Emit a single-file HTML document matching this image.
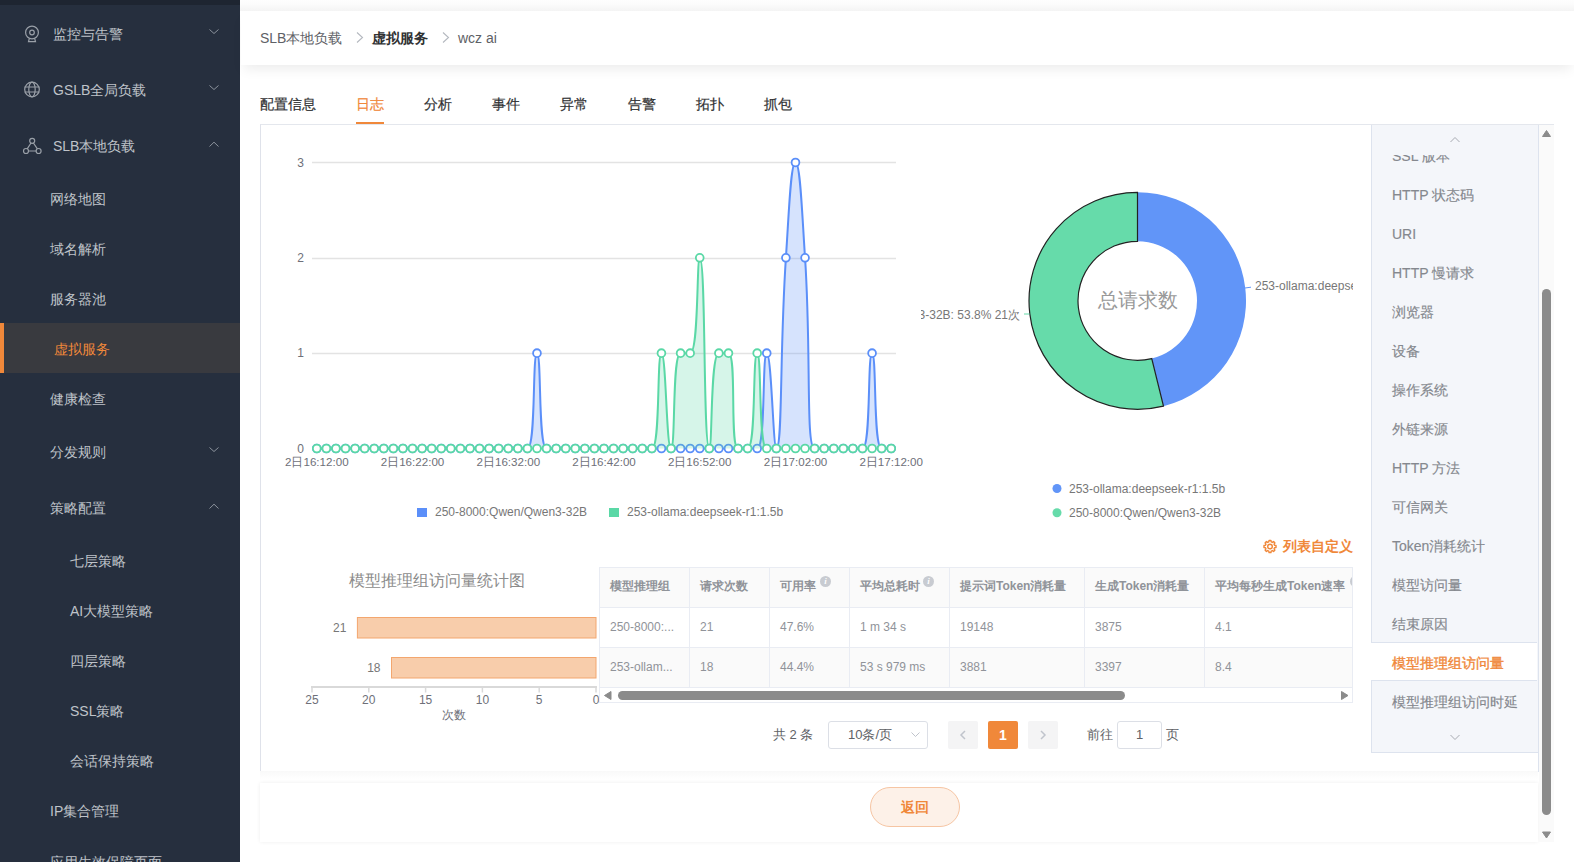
<!DOCTYPE html>
<html><head><meta charset="utf-8"><style>
html,body{margin:0;padding:0;width:1574px;height:862px;overflow:hidden;background:#fff;font-family:"Liberation Sans",sans-serif}
.sbt{position:absolute;font-size:14px;line-height:20px;color:#bfc3c9;white-space:nowrap}
.t14{position:absolute;font-size:14px;line-height:20px;white-space:nowrap}
.t13{position:absolute;font-size:13px;line-height:20px;white-space:nowrap}
.t12{position:absolute;font-size:12px;line-height:16px;white-space:nowrap}
.ax{font-size:12px;fill:#6e7079;font-family:"Liberation Sans",sans-serif}
svg text{font-family:"Liberation Sans",sans-serif}
</style></head><body>
<div style="position:absolute;left:0;top:0;width:240px;height:862px;background:#262f3e;overflow:hidden">
<div style="position:absolute;left:0;top:0;width:240px;height:5px;background:#1e2531"></div>
<div class="sbt" style="left:53px;top:24px">监控与告警</div>
<svg style="position:absolute;left:0;top:0" width="240" height="862"><path d="M209.5,29.5 L214,33.5 L218.5,29.5" fill="none" stroke="#8b929c" stroke-width="1"/></svg>
<div class="sbt" style="left:53px;top:80px">GSLB全局负载</div>
<svg style="position:absolute;left:0;top:0" width="240" height="862"><path d="M209.5,85.5 L214,89.5 L218.5,85.5" fill="none" stroke="#8b929c" stroke-width="1"/></svg>
<div class="sbt" style="left:53px;top:136px">SLB本地负载</div>
<svg style="position:absolute;left:0;top:0" width="240" height="862"><path d="M209.5,146.5 L214,142.2 L218.5,146.5" fill="none" stroke="#8b929c" stroke-width="1"/></svg>
<div class="sbt" style="left:50px;top:189px">网络地图</div>
<div class="sbt" style="left:50px;top:239px">域名解析</div>
<div class="sbt" style="left:50px;top:289px">服务器池</div>
<div style="position:absolute;left:0;top:323px;width:240px;height:50px;background:#393a3f"></div>
<div style="position:absolute;left:0;top:323px;width:4px;height:50px;background:#f0883a"></div>
<div class="sbt" style="left:54px;top:339px;color:#f0883a">虚拟服务</div>
<div class="sbt" style="left:50px;top:389px">健康检查</div>
<div class="sbt" style="left:50px;top:442px">分发规则</div>
<svg style="position:absolute;left:0;top:0" width="240" height="862"><path d="M209.5,447.5 L214,451.5 L218.5,447.5" fill="none" stroke="#8b929c" stroke-width="1"/></svg>
<div class="sbt" style="left:50px;top:498px">策略配置</div>
<svg style="position:absolute;left:0;top:0" width="240" height="862"><path d="M209.5,508.5 L214,504.2 L218.5,508.5" fill="none" stroke="#8b929c" stroke-width="1"/></svg>
<div class="sbt" style="left:70px;top:551px">七层策略</div>
<div class="sbt" style="left:70px;top:601px">AI大模型策略</div>
<div class="sbt" style="left:70px;top:651px">四层策略</div>
<div class="sbt" style="left:70px;top:701px">SSL策略</div>
<div class="sbt" style="left:70px;top:751px">会话保持策略</div>
<div class="sbt" style="left:50px;top:801px">IP集合管理</div>
<div class="sbt" style="left:50px;top:852px">应用生效保障页面</div>
<svg style="position:absolute;left:0;top:0" width="60" height="200">
<g fill="none" stroke="#9aa0a8" stroke-width="1.2">
<circle cx="32" cy="32.5" r="6.4"/><circle cx="32" cy="32.5" r="2.3"/><path d="M29.3,38.6 L28.5,41.6 L35.5,41.6 L34.7,38.6"/>
<circle cx="32" cy="89.5" r="7.3"/><ellipse cx="32" cy="89.5" rx="3.2" ry="7.3"/><path d="M24.7,87 H39.3 M24.7,92 H39.3"/>
<circle cx="32.2" cy="140.8" r="2.5"/><circle cx="26" cy="151" r="2.5"/><circle cx="38.6" cy="151" r="2.5"/>
<path d="M31,143 L27.2,148.8 M33.4,143 L37.4,148.8 M28.5,151 H36.1"/>
</g></svg>
</div>

<div style="position:absolute;left:240px;top:0;width:1334px;height:11px;background:linear-gradient(#fefefe 0%,#fcfcfc 35%,#f4f4f4 100%)"></div>
<div style="position:absolute;left:241px;top:11px;width:1333px;height:54px;background:#fff;box-shadow:0 7px 12px -3px rgba(0,0,0,0.08)"></div>
<div class="t14" style="left:260px;top:28px;color:#5e6166">SLB本地负载</div>
<svg style="position:absolute;left:353.5px;top:31px" width="12" height="14"><path d="M3,1.5 L8.5,6.5 L3,11.5" fill="none" stroke="#b4b8bf" stroke-width="1.1"/></svg>
<div class="t14" style="left:372px;top:28px;color:#303133;font-weight:bold">虚拟服务</div>
<svg style="position:absolute;left:439.5px;top:31px" width="12" height="14"><path d="M3,1.5 L8.5,6.5 L3,11.5" fill="none" stroke="#b4b8bf" stroke-width="1.1"/></svg>
<div class="t14" style="left:458px;top:28px;color:#5e6166">wcz ai</div>

<div class="t14" style="left:260px;top:94px;color:#303133;-webkit-text-stroke:0.2px #303133">配置信息</div>
<div class="t14" style="left:356px;top:94px;color:#f0883a;-webkit-text-stroke:0.2px #f0883a">日志</div>
<div class="t14" style="left:424px;top:94px;color:#303133;-webkit-text-stroke:0.2px #303133">分析</div>
<div class="t14" style="left:492px;top:94px;color:#303133;-webkit-text-stroke:0.2px #303133">事件</div>
<div class="t14" style="left:560px;top:94px;color:#303133;-webkit-text-stroke:0.2px #303133">异常</div>
<div class="t14" style="left:628px;top:94px;color:#303133;-webkit-text-stroke:0.2px #303133">告警</div>
<div class="t14" style="left:696px;top:94px;color:#303133;-webkit-text-stroke:0.2px #303133">拓扑</div>
<div class="t14" style="left:764px;top:94px;color:#303133;-webkit-text-stroke:0.2px #303133">抓包</div>
<div style="position:absolute;left:356px;top:122px;width:28px;height:3px;background:#f0883a"></div>

<div style="position:absolute;left:260px;top:124px;width:1278px;height:647px;border-top:1px solid #e4e7ed;border-left:1px solid #dfe2ea;box-sizing:border-box;"></div>
<div style="position:absolute;left:260px;top:771px;width:1278px;height:8px;background:linear-gradient(#f9f9f9,#fff)"></div>
<div style="position:absolute;left:260px;top:783px;width:1278px;height:59px;background:#fff;box-shadow:0 0 4px rgba(0,0,0,0.07)"></div>
<div style="position:absolute;left:870px;top:787px;width:90px;height:40px;border:1px solid #f6c5a3;background:#fdf1e8;border-radius:20px;box-sizing:border-box"></div>
<div class="t14" style="left:870px;top:797px;width:90px;text-align:center;color:#f0883a;font-weight:bold">返回</div>

<svg style="position:absolute;left:0;top:0" width="1574" height="862">
<line x1="312" y1="353.5" x2="896" y2="353.5" stroke="#e3e3e3" stroke-width="1.3"/>
<line x1="312" y1="258.5" x2="896" y2="258.5" stroke="#e3e3e3" stroke-width="1.3"/>
<line x1="312" y1="162.5" x2="896" y2="162.5" stroke="#e3e3e3" stroke-width="1.3"/>
<text x="304" y="452.5" text-anchor="end" class="ax">0</text>
<text x="304" y="357.1666666666667" text-anchor="end" class="ax">1</text>
<text x="304" y="261.83333333333337" text-anchor="end" class="ax">2</text>
<text x="304" y="166.5" text-anchor="end" class="ax">3</text>
<text x="316.8" y="466" text-anchor="middle" class="ax" style="font-size:11.6px">2日16:12:00</text>
<text x="412.5" y="466" text-anchor="middle" class="ax" style="font-size:11.6px">2日16:22:00</text>
<text x="508.3" y="466" text-anchor="middle" class="ax" style="font-size:11.6px">2日16:32:00</text>
<text x="604.0" y="466" text-anchor="middle" class="ax" style="font-size:11.6px">2日16:42:00</text>
<text x="699.7" y="466" text-anchor="middle" class="ax" style="font-size:11.6px">2日16:52:00</text>
<text x="795.5" y="466" text-anchor="middle" class="ax" style="font-size:11.6px">2日17:02:00</text>
<text x="891.2" y="466" text-anchor="middle" class="ax" style="font-size:11.6px">2日17:12:00</text>
<path d="M316.79,448.50 C316.79,448.50 321.57,448.50 326.36,448.50 C331.15,448.50 331.15,448.50 335.93,448.50 C340.72,448.50 340.72,448.50 345.51,448.50 C350.30,448.50 350.30,448.50 355.08,448.50 C359.87,448.50 359.87,448.50 364.66,448.50 C369.44,448.50 369.44,448.50 374.23,448.50 C379.02,448.50 379.02,448.50 383.80,448.50 C388.59,448.50 388.59,448.50 393.38,448.50 C398.16,448.50 398.16,448.50 402.95,448.50 C407.74,448.50 407.74,448.50 412.52,448.50 C417.31,448.50 417.31,448.50 422.10,448.50 C426.89,448.50 426.89,448.50 431.67,448.50 C436.46,448.50 436.46,448.50 441.25,448.50 C446.03,448.50 446.03,448.50 450.82,448.50 C455.61,448.50 455.61,448.50 460.39,448.50 C465.18,448.50 465.18,448.50 469.97,448.50 C474.75,448.50 474.75,448.50 479.54,448.50 C484.33,448.50 484.33,448.50 489.11,448.50 C493.90,448.50 493.90,448.50 498.69,448.50 C503.48,448.50 503.48,448.50 508.26,448.50 C513.05,448.50 513.05,448.50 517.84,448.50 C522.62,448.50 526.54,448.50 527.41,448.50 C536.11,448.50 532.20,353.17 536.98,353.17 C541.77,353.17 537.85,448.50 546.56,448.50 C547.43,448.50 551.34,448.50 556.13,448.50 C560.92,448.50 560.92,448.50 565.70,448.50 C570.49,448.50 570.49,448.50 575.28,448.50 C580.07,448.50 580.07,448.50 584.85,448.50 C589.64,448.50 589.64,448.50 594.43,448.50 C599.21,448.50 599.21,448.50 604.00,448.50 C608.79,448.50 608.79,448.50 613.57,448.50 C618.36,448.50 618.36,448.50 623.15,448.50 C627.93,448.50 627.93,448.50 632.72,448.50 C637.51,448.50 637.51,448.50 642.30,448.50 C647.08,448.50 647.08,448.50 651.87,448.50 C656.66,448.50 656.66,448.50 661.44,448.50 C666.23,448.50 666.23,448.50 671.02,448.50 C675.80,448.50 675.80,448.50 680.59,448.50 C685.38,448.50 685.38,448.50 690.16,448.50 C694.95,448.50 694.95,448.50 699.74,448.50 C704.52,448.50 704.52,448.50 709.31,448.50 C714.10,448.50 714.10,448.50 718.89,448.50 C723.67,448.50 723.67,448.50 728.46,448.50 C733.25,448.50 733.25,448.50 738.03,448.50 C742.82,448.50 742.82,448.50 747.61,448.50 C752.39,448.50 756.31,448.50 757.18,448.50 C765.88,448.50 761.97,353.17 766.75,353.17 C771.54,353.17 773.13,448.50 776.33,448.50 C782.70,448.50 779.53,353.05 785.90,257.83 C789.10,210.05 790.69,162.50 795.48,162.50 C800.26,162.50 801.85,210.05 805.05,257.83 C811.42,353.05 805.51,448.50 814.62,448.50 C815.08,448.50 819.41,448.50 824.20,448.50 C828.98,448.50 828.98,448.50 833.77,448.50 C838.56,448.50 838.56,448.50 843.34,448.50 C848.13,448.50 848.13,448.50 852.92,448.50 C857.70,448.50 861.62,448.50 862.49,448.50 C871.20,448.50 867.28,353.17 872.07,353.17 C876.85,353.17 872.94,448.50 881.64,448.50 C882.51,448.50 891.21,448.50 891.21,448.50 L891.21,448.5 L316.79,448.5 Z" fill="rgba(91,143,249,0.25)" stroke="none"/>
<path d="M316.79,448.50 C316.79,448.50 321.57,448.50 326.36,448.50 C331.15,448.50 331.15,448.50 335.93,448.50 C340.72,448.50 340.72,448.50 345.51,448.50 C350.30,448.50 350.30,448.50 355.08,448.50 C359.87,448.50 359.87,448.50 364.66,448.50 C369.44,448.50 369.44,448.50 374.23,448.50 C379.02,448.50 379.02,448.50 383.80,448.50 C388.59,448.50 388.59,448.50 393.38,448.50 C398.16,448.50 398.16,448.50 402.95,448.50 C407.74,448.50 407.74,448.50 412.52,448.50 C417.31,448.50 417.31,448.50 422.10,448.50 C426.89,448.50 426.89,448.50 431.67,448.50 C436.46,448.50 436.46,448.50 441.25,448.50 C446.03,448.50 446.03,448.50 450.82,448.50 C455.61,448.50 455.61,448.50 460.39,448.50 C465.18,448.50 465.18,448.50 469.97,448.50 C474.75,448.50 474.75,448.50 479.54,448.50 C484.33,448.50 484.33,448.50 489.11,448.50 C493.90,448.50 493.90,448.50 498.69,448.50 C503.48,448.50 503.48,448.50 508.26,448.50 C513.05,448.50 513.05,448.50 517.84,448.50 C522.62,448.50 526.54,448.50 527.41,448.50 C536.11,448.50 532.20,353.17 536.98,353.17 C541.77,353.17 537.85,448.50 546.56,448.50 C547.43,448.50 551.34,448.50 556.13,448.50 C560.92,448.50 560.92,448.50 565.70,448.50 C570.49,448.50 570.49,448.50 575.28,448.50 C580.07,448.50 580.07,448.50 584.85,448.50 C589.64,448.50 589.64,448.50 594.43,448.50 C599.21,448.50 599.21,448.50 604.00,448.50 C608.79,448.50 608.79,448.50 613.57,448.50 C618.36,448.50 618.36,448.50 623.15,448.50 C627.93,448.50 627.93,448.50 632.72,448.50 C637.51,448.50 637.51,448.50 642.30,448.50 C647.08,448.50 647.08,448.50 651.87,448.50 C656.66,448.50 656.66,448.50 661.44,448.50 C666.23,448.50 666.23,448.50 671.02,448.50 C675.80,448.50 675.80,448.50 680.59,448.50 C685.38,448.50 685.38,448.50 690.16,448.50 C694.95,448.50 694.95,448.50 699.74,448.50 C704.52,448.50 704.52,448.50 709.31,448.50 C714.10,448.50 714.10,448.50 718.89,448.50 C723.67,448.50 723.67,448.50 728.46,448.50 C733.25,448.50 733.25,448.50 738.03,448.50 C742.82,448.50 742.82,448.50 747.61,448.50 C752.39,448.50 756.31,448.50 757.18,448.50 C765.88,448.50 761.97,353.17 766.75,353.17 C771.54,353.17 773.13,448.50 776.33,448.50 C782.70,448.50 779.53,353.05 785.90,257.83 C789.10,210.05 790.69,162.50 795.48,162.50 C800.26,162.50 801.85,210.05 805.05,257.83 C811.42,353.05 805.51,448.50 814.62,448.50 C815.08,448.50 819.41,448.50 824.20,448.50 C828.98,448.50 828.98,448.50 833.77,448.50 C838.56,448.50 838.56,448.50 843.34,448.50 C848.13,448.50 848.13,448.50 852.92,448.50 C857.70,448.50 861.62,448.50 862.49,448.50 C871.20,448.50 867.28,353.17 872.07,353.17 C876.85,353.17 872.94,448.50 881.64,448.50 C882.51,448.50 891.21,448.50 891.21,448.50" fill="none" stroke="#5b8ff9" stroke-width="2"/>
<circle cx="316.79" cy="448.50" r="3.9" fill="#fff" stroke="#5b8ff9" stroke-width="1.8"/>
<circle cx="326.36" cy="448.50" r="3.9" fill="#fff" stroke="#5b8ff9" stroke-width="1.8"/>
<circle cx="335.93" cy="448.50" r="3.9" fill="#fff" stroke="#5b8ff9" stroke-width="1.8"/>
<circle cx="345.51" cy="448.50" r="3.9" fill="#fff" stroke="#5b8ff9" stroke-width="1.8"/>
<circle cx="355.08" cy="448.50" r="3.9" fill="#fff" stroke="#5b8ff9" stroke-width="1.8"/>
<circle cx="364.66" cy="448.50" r="3.9" fill="#fff" stroke="#5b8ff9" stroke-width="1.8"/>
<circle cx="374.23" cy="448.50" r="3.9" fill="#fff" stroke="#5b8ff9" stroke-width="1.8"/>
<circle cx="383.80" cy="448.50" r="3.9" fill="#fff" stroke="#5b8ff9" stroke-width="1.8"/>
<circle cx="393.38" cy="448.50" r="3.9" fill="#fff" stroke="#5b8ff9" stroke-width="1.8"/>
<circle cx="402.95" cy="448.50" r="3.9" fill="#fff" stroke="#5b8ff9" stroke-width="1.8"/>
<circle cx="412.52" cy="448.50" r="3.9" fill="#fff" stroke="#5b8ff9" stroke-width="1.8"/>
<circle cx="422.10" cy="448.50" r="3.9" fill="#fff" stroke="#5b8ff9" stroke-width="1.8"/>
<circle cx="431.67" cy="448.50" r="3.9" fill="#fff" stroke="#5b8ff9" stroke-width="1.8"/>
<circle cx="441.25" cy="448.50" r="3.9" fill="#fff" stroke="#5b8ff9" stroke-width="1.8"/>
<circle cx="450.82" cy="448.50" r="3.9" fill="#fff" stroke="#5b8ff9" stroke-width="1.8"/>
<circle cx="460.39" cy="448.50" r="3.9" fill="#fff" stroke="#5b8ff9" stroke-width="1.8"/>
<circle cx="469.97" cy="448.50" r="3.9" fill="#fff" stroke="#5b8ff9" stroke-width="1.8"/>
<circle cx="479.54" cy="448.50" r="3.9" fill="#fff" stroke="#5b8ff9" stroke-width="1.8"/>
<circle cx="489.11" cy="448.50" r="3.9" fill="#fff" stroke="#5b8ff9" stroke-width="1.8"/>
<circle cx="498.69" cy="448.50" r="3.9" fill="#fff" stroke="#5b8ff9" stroke-width="1.8"/>
<circle cx="508.26" cy="448.50" r="3.9" fill="#fff" stroke="#5b8ff9" stroke-width="1.8"/>
<circle cx="517.84" cy="448.50" r="3.9" fill="#fff" stroke="#5b8ff9" stroke-width="1.8"/>
<circle cx="527.41" cy="448.50" r="3.9" fill="#fff" stroke="#5b8ff9" stroke-width="1.8"/>
<circle cx="536.98" cy="353.17" r="3.9" fill="#fff" stroke="#5b8ff9" stroke-width="1.8"/>
<circle cx="546.56" cy="448.50" r="3.9" fill="#fff" stroke="#5b8ff9" stroke-width="1.8"/>
<circle cx="556.13" cy="448.50" r="3.9" fill="#fff" stroke="#5b8ff9" stroke-width="1.8"/>
<circle cx="565.70" cy="448.50" r="3.9" fill="#fff" stroke="#5b8ff9" stroke-width="1.8"/>
<circle cx="575.28" cy="448.50" r="3.9" fill="#fff" stroke="#5b8ff9" stroke-width="1.8"/>
<circle cx="584.85" cy="448.50" r="3.9" fill="#fff" stroke="#5b8ff9" stroke-width="1.8"/>
<circle cx="594.43" cy="448.50" r="3.9" fill="#fff" stroke="#5b8ff9" stroke-width="1.8"/>
<circle cx="604.00" cy="448.50" r="3.9" fill="#fff" stroke="#5b8ff9" stroke-width="1.8"/>
<circle cx="613.57" cy="448.50" r="3.9" fill="#fff" stroke="#5b8ff9" stroke-width="1.8"/>
<circle cx="623.15" cy="448.50" r="3.9" fill="#fff" stroke="#5b8ff9" stroke-width="1.8"/>
<circle cx="632.72" cy="448.50" r="3.9" fill="#fff" stroke="#5b8ff9" stroke-width="1.8"/>
<circle cx="642.30" cy="448.50" r="3.9" fill="#fff" stroke="#5b8ff9" stroke-width="1.8"/>
<circle cx="651.87" cy="448.50" r="3.9" fill="#fff" stroke="#5b8ff9" stroke-width="1.8"/>
<circle cx="661.44" cy="448.50" r="3.9" fill="#fff" stroke="#5b8ff9" stroke-width="1.8"/>
<circle cx="671.02" cy="448.50" r="3.9" fill="#fff" stroke="#5b8ff9" stroke-width="1.8"/>
<circle cx="680.59" cy="448.50" r="3.9" fill="#fff" stroke="#5b8ff9" stroke-width="1.8"/>
<circle cx="690.16" cy="448.50" r="3.9" fill="#fff" stroke="#5b8ff9" stroke-width="1.8"/>
<circle cx="699.74" cy="448.50" r="3.9" fill="#fff" stroke="#5b8ff9" stroke-width="1.8"/>
<circle cx="709.31" cy="448.50" r="3.9" fill="#fff" stroke="#5b8ff9" stroke-width="1.8"/>
<circle cx="718.89" cy="448.50" r="3.9" fill="#fff" stroke="#5b8ff9" stroke-width="1.8"/>
<circle cx="728.46" cy="448.50" r="3.9" fill="#fff" stroke="#5b8ff9" stroke-width="1.8"/>
<circle cx="738.03" cy="448.50" r="3.9" fill="#fff" stroke="#5b8ff9" stroke-width="1.8"/>
<circle cx="747.61" cy="448.50" r="3.9" fill="#fff" stroke="#5b8ff9" stroke-width="1.8"/>
<circle cx="757.18" cy="448.50" r="3.9" fill="#fff" stroke="#5b8ff9" stroke-width="1.8"/>
<circle cx="766.75" cy="353.17" r="3.9" fill="#fff" stroke="#5b8ff9" stroke-width="1.8"/>
<circle cx="776.33" cy="448.50" r="3.9" fill="#fff" stroke="#5b8ff9" stroke-width="1.8"/>
<circle cx="785.90" cy="257.83" r="3.9" fill="#fff" stroke="#5b8ff9" stroke-width="1.8"/>
<circle cx="795.48" cy="162.50" r="3.9" fill="#fff" stroke="#5b8ff9" stroke-width="1.8"/>
<circle cx="805.05" cy="257.83" r="3.9" fill="#fff" stroke="#5b8ff9" stroke-width="1.8"/>
<circle cx="814.62" cy="448.50" r="3.9" fill="#fff" stroke="#5b8ff9" stroke-width="1.8"/>
<circle cx="824.20" cy="448.50" r="3.9" fill="#fff" stroke="#5b8ff9" stroke-width="1.8"/>
<circle cx="833.77" cy="448.50" r="3.9" fill="#fff" stroke="#5b8ff9" stroke-width="1.8"/>
<circle cx="843.34" cy="448.50" r="3.9" fill="#fff" stroke="#5b8ff9" stroke-width="1.8"/>
<circle cx="852.92" cy="448.50" r="3.9" fill="#fff" stroke="#5b8ff9" stroke-width="1.8"/>
<circle cx="862.49" cy="448.50" r="3.9" fill="#fff" stroke="#5b8ff9" stroke-width="1.8"/>
<circle cx="872.07" cy="353.17" r="3.9" fill="#fff" stroke="#5b8ff9" stroke-width="1.8"/>
<circle cx="881.64" cy="448.50" r="3.9" fill="#fff" stroke="#5b8ff9" stroke-width="1.8"/>
<circle cx="891.21" cy="448.50" r="3.9" fill="#fff" stroke="#5b8ff9" stroke-width="1.8"/>
<path d="M316.79,448.50 C316.79,448.50 321.57,448.50 326.36,448.50 C331.15,448.50 331.15,448.50 335.93,448.50 C340.72,448.50 340.72,448.50 345.51,448.50 C350.30,448.50 350.30,448.50 355.08,448.50 C359.87,448.50 359.87,448.50 364.66,448.50 C369.44,448.50 369.44,448.50 374.23,448.50 C379.02,448.50 379.02,448.50 383.80,448.50 C388.59,448.50 388.59,448.50 393.38,448.50 C398.16,448.50 398.16,448.50 402.95,448.50 C407.74,448.50 407.74,448.50 412.52,448.50 C417.31,448.50 417.31,448.50 422.10,448.50 C426.89,448.50 426.89,448.50 431.67,448.50 C436.46,448.50 436.46,448.50 441.25,448.50 C446.03,448.50 446.03,448.50 450.82,448.50 C455.61,448.50 455.61,448.50 460.39,448.50 C465.18,448.50 465.18,448.50 469.97,448.50 C474.75,448.50 474.75,448.50 479.54,448.50 C484.33,448.50 484.33,448.50 489.11,448.50 C493.90,448.50 493.90,448.50 498.69,448.50 C503.48,448.50 503.48,448.50 508.26,448.50 C513.05,448.50 513.05,448.50 517.84,448.50 C522.62,448.50 522.62,448.50 527.41,448.50 C532.20,448.50 532.20,448.50 536.98,448.50 C541.77,448.50 541.77,448.50 546.56,448.50 C551.34,448.50 551.34,448.50 556.13,448.50 C560.92,448.50 560.92,448.50 565.70,448.50 C570.49,448.50 570.49,448.50 575.28,448.50 C580.07,448.50 580.07,448.50 584.85,448.50 C589.64,448.50 589.64,448.50 594.43,448.50 C599.21,448.50 599.21,448.50 604.00,448.50 C608.79,448.50 608.79,448.50 613.57,448.50 C618.36,448.50 618.36,448.50 623.15,448.50 C627.93,448.50 627.93,448.50 632.72,448.50 C637.51,448.50 637.51,448.50 642.30,448.50 C647.08,448.50 651.00,448.50 651.87,448.50 C660.57,448.50 656.66,353.17 661.44,353.17 C666.23,353.17 666.23,448.50 671.02,448.50 C675.80,448.50 671.89,353.17 680.59,353.17 C681.46,353.17 689.29,353.17 690.16,353.17 C698.87,353.17 696.54,257.83 699.74,257.83 C706.11,257.83 702.94,448.50 709.31,448.50 C712.51,448.50 710.18,353.17 718.89,353.17 C719.75,353.17 727.59,353.17 728.46,353.17 C737.16,353.17 729.33,448.50 738.03,448.50 C738.90,448.50 746.74,448.50 747.61,448.50 C756.31,448.50 752.39,353.17 757.18,353.17 C761.97,353.17 758.05,448.50 766.75,448.50 C767.62,448.50 771.54,448.50 776.33,448.50 C781.11,448.50 781.11,448.50 785.90,448.50 C790.69,448.50 790.69,448.50 795.48,448.50 C800.26,448.50 800.26,448.50 805.05,448.50 C809.84,448.50 809.84,448.50 814.62,448.50 C819.41,448.50 819.41,448.50 824.20,448.50 C828.98,448.50 828.98,448.50 833.77,448.50 C838.56,448.50 838.56,448.50 843.34,448.50 C848.13,448.50 848.13,448.50 852.92,448.50 C857.70,448.50 857.70,448.50 862.49,448.50 C867.28,448.50 867.28,448.50 872.07,448.50 C876.85,448.50 876.85,448.50 881.64,448.50 C886.43,448.50 891.21,448.50 891.21,448.50 L891.21,448.5 L316.79,448.5 Z" fill="rgba(90,216,166,0.25)" stroke="none"/>
<path d="M316.79,448.50 C316.79,448.50 321.57,448.50 326.36,448.50 C331.15,448.50 331.15,448.50 335.93,448.50 C340.72,448.50 340.72,448.50 345.51,448.50 C350.30,448.50 350.30,448.50 355.08,448.50 C359.87,448.50 359.87,448.50 364.66,448.50 C369.44,448.50 369.44,448.50 374.23,448.50 C379.02,448.50 379.02,448.50 383.80,448.50 C388.59,448.50 388.59,448.50 393.38,448.50 C398.16,448.50 398.16,448.50 402.95,448.50 C407.74,448.50 407.74,448.50 412.52,448.50 C417.31,448.50 417.31,448.50 422.10,448.50 C426.89,448.50 426.89,448.50 431.67,448.50 C436.46,448.50 436.46,448.50 441.25,448.50 C446.03,448.50 446.03,448.50 450.82,448.50 C455.61,448.50 455.61,448.50 460.39,448.50 C465.18,448.50 465.18,448.50 469.97,448.50 C474.75,448.50 474.75,448.50 479.54,448.50 C484.33,448.50 484.33,448.50 489.11,448.50 C493.90,448.50 493.90,448.50 498.69,448.50 C503.48,448.50 503.48,448.50 508.26,448.50 C513.05,448.50 513.05,448.50 517.84,448.50 C522.62,448.50 522.62,448.50 527.41,448.50 C532.20,448.50 532.20,448.50 536.98,448.50 C541.77,448.50 541.77,448.50 546.56,448.50 C551.34,448.50 551.34,448.50 556.13,448.50 C560.92,448.50 560.92,448.50 565.70,448.50 C570.49,448.50 570.49,448.50 575.28,448.50 C580.07,448.50 580.07,448.50 584.85,448.50 C589.64,448.50 589.64,448.50 594.43,448.50 C599.21,448.50 599.21,448.50 604.00,448.50 C608.79,448.50 608.79,448.50 613.57,448.50 C618.36,448.50 618.36,448.50 623.15,448.50 C627.93,448.50 627.93,448.50 632.72,448.50 C637.51,448.50 637.51,448.50 642.30,448.50 C647.08,448.50 651.00,448.50 651.87,448.50 C660.57,448.50 656.66,353.17 661.44,353.17 C666.23,353.17 666.23,448.50 671.02,448.50 C675.80,448.50 671.89,353.17 680.59,353.17 C681.46,353.17 689.29,353.17 690.16,353.17 C698.87,353.17 696.54,257.83 699.74,257.83 C706.11,257.83 702.94,448.50 709.31,448.50 C712.51,448.50 710.18,353.17 718.89,353.17 C719.75,353.17 727.59,353.17 728.46,353.17 C737.16,353.17 729.33,448.50 738.03,448.50 C738.90,448.50 746.74,448.50 747.61,448.50 C756.31,448.50 752.39,353.17 757.18,353.17 C761.97,353.17 758.05,448.50 766.75,448.50 C767.62,448.50 771.54,448.50 776.33,448.50 C781.11,448.50 781.11,448.50 785.90,448.50 C790.69,448.50 790.69,448.50 795.48,448.50 C800.26,448.50 800.26,448.50 805.05,448.50 C809.84,448.50 809.84,448.50 814.62,448.50 C819.41,448.50 819.41,448.50 824.20,448.50 C828.98,448.50 828.98,448.50 833.77,448.50 C838.56,448.50 838.56,448.50 843.34,448.50 C848.13,448.50 848.13,448.50 852.92,448.50 C857.70,448.50 857.70,448.50 862.49,448.50 C867.28,448.50 867.28,448.50 872.07,448.50 C876.85,448.50 876.85,448.50 881.64,448.50 C886.43,448.50 891.21,448.50 891.21,448.50" fill="none" stroke="#5ad8a6" stroke-width="2"/>
<circle cx="316.79" cy="448.50" r="3.9" fill="#fff" stroke="#5ad8a6" stroke-width="1.8"/>
<circle cx="326.36" cy="448.50" r="3.9" fill="#fff" stroke="#5ad8a6" stroke-width="1.8"/>
<circle cx="335.93" cy="448.50" r="3.9" fill="#fff" stroke="#5ad8a6" stroke-width="1.8"/>
<circle cx="345.51" cy="448.50" r="3.9" fill="#fff" stroke="#5ad8a6" stroke-width="1.8"/>
<circle cx="355.08" cy="448.50" r="3.9" fill="#fff" stroke="#5ad8a6" stroke-width="1.8"/>
<circle cx="364.66" cy="448.50" r="3.9" fill="#fff" stroke="#5ad8a6" stroke-width="1.8"/>
<circle cx="374.23" cy="448.50" r="3.9" fill="#fff" stroke="#5ad8a6" stroke-width="1.8"/>
<circle cx="383.80" cy="448.50" r="3.9" fill="#fff" stroke="#5ad8a6" stroke-width="1.8"/>
<circle cx="393.38" cy="448.50" r="3.9" fill="#fff" stroke="#5ad8a6" stroke-width="1.8"/>
<circle cx="402.95" cy="448.50" r="3.9" fill="#fff" stroke="#5ad8a6" stroke-width="1.8"/>
<circle cx="412.52" cy="448.50" r="3.9" fill="#fff" stroke="#5ad8a6" stroke-width="1.8"/>
<circle cx="422.10" cy="448.50" r="3.9" fill="#fff" stroke="#5ad8a6" stroke-width="1.8"/>
<circle cx="431.67" cy="448.50" r="3.9" fill="#fff" stroke="#5ad8a6" stroke-width="1.8"/>
<circle cx="441.25" cy="448.50" r="3.9" fill="#fff" stroke="#5ad8a6" stroke-width="1.8"/>
<circle cx="450.82" cy="448.50" r="3.9" fill="#fff" stroke="#5ad8a6" stroke-width="1.8"/>
<circle cx="460.39" cy="448.50" r="3.9" fill="#fff" stroke="#5ad8a6" stroke-width="1.8"/>
<circle cx="469.97" cy="448.50" r="3.9" fill="#fff" stroke="#5ad8a6" stroke-width="1.8"/>
<circle cx="479.54" cy="448.50" r="3.9" fill="#fff" stroke="#5ad8a6" stroke-width="1.8"/>
<circle cx="489.11" cy="448.50" r="3.9" fill="#fff" stroke="#5ad8a6" stroke-width="1.8"/>
<circle cx="498.69" cy="448.50" r="3.9" fill="#fff" stroke="#5ad8a6" stroke-width="1.8"/>
<circle cx="508.26" cy="448.50" r="3.9" fill="#fff" stroke="#5ad8a6" stroke-width="1.8"/>
<circle cx="517.84" cy="448.50" r="3.9" fill="#fff" stroke="#5ad8a6" stroke-width="1.8"/>
<circle cx="527.41" cy="448.50" r="3.9" fill="#fff" stroke="#5ad8a6" stroke-width="1.8"/>
<circle cx="536.98" cy="448.50" r="3.9" fill="#fff" stroke="#5ad8a6" stroke-width="1.8"/>
<circle cx="546.56" cy="448.50" r="3.9" fill="#fff" stroke="#5ad8a6" stroke-width="1.8"/>
<circle cx="556.13" cy="448.50" r="3.9" fill="#fff" stroke="#5ad8a6" stroke-width="1.8"/>
<circle cx="565.70" cy="448.50" r="3.9" fill="#fff" stroke="#5ad8a6" stroke-width="1.8"/>
<circle cx="575.28" cy="448.50" r="3.9" fill="#fff" stroke="#5ad8a6" stroke-width="1.8"/>
<circle cx="584.85" cy="448.50" r="3.9" fill="#fff" stroke="#5ad8a6" stroke-width="1.8"/>
<circle cx="594.43" cy="448.50" r="3.9" fill="#fff" stroke="#5ad8a6" stroke-width="1.8"/>
<circle cx="604.00" cy="448.50" r="3.9" fill="#fff" stroke="#5ad8a6" stroke-width="1.8"/>
<circle cx="613.57" cy="448.50" r="3.9" fill="#fff" stroke="#5ad8a6" stroke-width="1.8"/>
<circle cx="623.15" cy="448.50" r="3.9" fill="#fff" stroke="#5ad8a6" stroke-width="1.8"/>
<circle cx="632.72" cy="448.50" r="3.9" fill="#fff" stroke="#5ad8a6" stroke-width="1.8"/>
<circle cx="642.30" cy="448.50" r="3.9" fill="#fff" stroke="#5ad8a6" stroke-width="1.8"/>
<circle cx="651.87" cy="448.50" r="3.9" fill="#fff" stroke="#5ad8a6" stroke-width="1.8"/>
<circle cx="661.44" cy="353.17" r="3.9" fill="#fff" stroke="#5ad8a6" stroke-width="1.8"/>
<circle cx="671.02" cy="448.50" r="3.9" fill="#fff" stroke="#5ad8a6" stroke-width="1.8"/>
<circle cx="680.59" cy="353.17" r="3.9" fill="#fff" stroke="#5ad8a6" stroke-width="1.8"/>
<circle cx="690.16" cy="353.17" r="3.9" fill="#fff" stroke="#5ad8a6" stroke-width="1.8"/>
<circle cx="699.74" cy="257.83" r="3.9" fill="#fff" stroke="#5ad8a6" stroke-width="1.8"/>
<circle cx="709.31" cy="448.50" r="3.9" fill="#fff" stroke="#5ad8a6" stroke-width="1.8"/>
<circle cx="718.89" cy="353.17" r="3.9" fill="#fff" stroke="#5ad8a6" stroke-width="1.8"/>
<circle cx="728.46" cy="353.17" r="3.9" fill="#fff" stroke="#5ad8a6" stroke-width="1.8"/>
<circle cx="738.03" cy="448.50" r="3.9" fill="#fff" stroke="#5ad8a6" stroke-width="1.8"/>
<circle cx="747.61" cy="448.50" r="3.9" fill="#fff" stroke="#5ad8a6" stroke-width="1.8"/>
<circle cx="757.18" cy="353.17" r="3.9" fill="#fff" stroke="#5ad8a6" stroke-width="1.8"/>
<circle cx="766.75" cy="448.50" r="3.9" fill="#fff" stroke="#5ad8a6" stroke-width="1.8"/>
<circle cx="776.33" cy="448.50" r="3.9" fill="#fff" stroke="#5ad8a6" stroke-width="1.8"/>
<circle cx="785.90" cy="448.50" r="3.9" fill="#fff" stroke="#5ad8a6" stroke-width="1.8"/>
<circle cx="795.48" cy="448.50" r="3.9" fill="#fff" stroke="#5ad8a6" stroke-width="1.8"/>
<circle cx="805.05" cy="448.50" r="3.9" fill="#fff" stroke="#5ad8a6" stroke-width="1.8"/>
<circle cx="814.62" cy="448.50" r="3.9" fill="#fff" stroke="#5ad8a6" stroke-width="1.8"/>
<circle cx="824.20" cy="448.50" r="3.9" fill="#fff" stroke="#5ad8a6" stroke-width="1.8"/>
<circle cx="833.77" cy="448.50" r="3.9" fill="#fff" stroke="#5ad8a6" stroke-width="1.8"/>
<circle cx="843.34" cy="448.50" r="3.9" fill="#fff" stroke="#5ad8a6" stroke-width="1.8"/>
<circle cx="852.92" cy="448.50" r="3.9" fill="#fff" stroke="#5ad8a6" stroke-width="1.8"/>
<circle cx="862.49" cy="448.50" r="3.9" fill="#fff" stroke="#5ad8a6" stroke-width="1.8"/>
<circle cx="872.07" cy="448.50" r="3.9" fill="#fff" stroke="#5ad8a6" stroke-width="1.8"/>
<circle cx="881.64" cy="448.50" r="3.9" fill="#fff" stroke="#5ad8a6" stroke-width="1.8"/>
<circle cx="891.21" cy="448.50" r="3.9" fill="#fff" stroke="#5ad8a6" stroke-width="1.8"/>
<rect x="417" y="508" width="10" height="9" fill="#5b8ff9"/><text x="435" y="516" class="ax" style="fill:#777">250-8000:Qwen/Qwen3-32B</text>
<rect x="609" y="508" width="10" height="9" fill="#5ad8a6"/><text x="627" y="516" class="ax" style="fill:#777">253-ollama:deepseek-r1:1.5b</text>
</svg>
<svg style="position:absolute;left:0;top:0" width="1574" height="862">
<defs><clipPath id="pc"><rect x="921" y="130" width="432" height="400"/></clipPath></defs><g clip-path="url(#pc)">
<path d="M1137.50,192.30 A108.5,108.5 0 0 1 1163.47,406.15 L1151.74,358.57 A59.5,59.5 0 0 0 1137.50,241.30 Z" fill="#6195f8" stroke="none" stroke-width="1.2"/>
<path d="M1163.47,406.15 A108.5,108.5 0 1 1 1137.50,192.30 L1137.50,241.30 A59.5,59.5 0 1 0 1151.74,358.57 Z" fill="#66dbaa" stroke="#222" stroke-width="1.2"/>
<text x="1138" y="307" text-anchor="middle" style="font-size:20px;fill:#999">总请求数</text>
<path d="M1245,288 L1251,287.2" stroke="#6195f8" fill="none"/><text x="1255" y="289.5" class="ax" style="fill:#777">253-ollama:deepseek-r1:1.5b: 46.2% 18次</text>
<path d="M1029.5,314 L1024,314" stroke="#66dbaa" fill="none"/><text x="1020" y="319" text-anchor="end" class="ax" style="fill:#777">250-8000:Qwen/Qwen3-32B: 53.8% 21次</text>
</g>
<circle cx="1057" cy="488.5" r="4.5" fill="#6195f8"/><text x="1069" y="492.5" class="ax" style="fill:#777">253-ollama:deepseek-r1:1.5b</text>
<circle cx="1057" cy="512.8" r="4.5" fill="#66dbaa"/><text x="1069" y="516.8" class="ax" style="fill:#777">250-8000:Qwen/Qwen3-32B</text>
</svg>
<svg style="position:absolute;left:0;top:0" width="1574" height="862">
<text x="437" y="586" text-anchor="middle" style="font-size:16px;fill:#8c8c8c">模型推理组访问量统计图</text>
<rect x="357.4" y="617.5" width="238.6" height="20.5" fill="#f8cdab" stroke="#f3a66e" stroke-width="1"/>
<text x="346.4" y="631.5" text-anchor="end" class="ax" style="fill:#777">21</text>
<rect x="391.5" y="657.5" width="204.5" height="20.5" fill="#f8cdab" stroke="#f3a66e" stroke-width="1"/>
<text x="380.5" y="671.5" text-anchor="end" class="ax" style="fill:#777">18</text>
<path d="M311,687 H597" stroke="#d9d9d9" stroke-width="2"/>
<path d="M312.0,687 V692.5" stroke="#d9d9d9" stroke-width="1.5"/>
<text x="312.0" y="704" text-anchor="middle" class="ax">25</text>
<path d="M368.8,687 V692.5" stroke="#d9d9d9" stroke-width="1.5"/>
<text x="368.8" y="704" text-anchor="middle" class="ax">20</text>
<path d="M425.6,687 V692.5" stroke="#d9d9d9" stroke-width="1.5"/>
<text x="425.6" y="704" text-anchor="middle" class="ax">15</text>
<path d="M482.4,687 V692.5" stroke="#d9d9d9" stroke-width="1.5"/>
<text x="482.4" y="704" text-anchor="middle" class="ax">10</text>
<path d="M539.2,687 V692.5" stroke="#d9d9d9" stroke-width="1.5"/>
<text x="539.2" y="704" text-anchor="middle" class="ax">5</text>
<path d="M596.0,687 V692.5" stroke="#d9d9d9" stroke-width="1.5"/>
<text x="596.0" y="704" text-anchor="middle" class="ax">0</text>
<text x="454" y="719" text-anchor="middle" class="ax">次数</text>
</svg>
<div style="position:absolute;left:599px;top:567px;width:754px;height:136px;overflow:hidden">
<div style="position:absolute;left:0;top:0;width:754px;height:40px;background:#fafafa"></div>
<div style="position:absolute;left:0;top:80px;width:754px;height:40px;background:#fafafa"></div>
<div style="position:absolute;left:0;top:0px;width:754px;height:1px;background:#e9ecf3"></div>
<div style="position:absolute;left:0;top:40px;width:754px;height:1px;background:#e9ecf3"></div>
<div style="position:absolute;left:0;top:80px;width:754px;height:1px;background:#e9ecf3"></div>
<div style="position:absolute;left:0;top:120px;width:754px;height:1px;background:#e9ecf3"></div>
<div style="position:absolute;left:0;top:135px;width:754px;height:1px;background:#e9ecf3"></div>
<div style="position:absolute;left:0;top:0;width:1px;height:136px;background:#e9ecf3"></div>
<div style="position:absolute;left:753px;top:0;width:1px;height:136px;background:#e9ecf3"></div>
<div style="position:absolute;left:90px;top:0;width:1px;height:120px;background:#e9ecf3"></div>
<div style="position:absolute;left:170px;top:0;width:1px;height:120px;background:#e9ecf3"></div>
<div style="position:absolute;left:250px;top:0;width:1px;height:120px;background:#e9ecf3"></div>
<div style="position:absolute;left:350px;top:0;width:1px;height:120px;background:#e9ecf3"></div>
<div style="position:absolute;left:485px;top:0;width:1px;height:120px;background:#e9ecf3"></div>
<div style="position:absolute;left:605px;top:0;width:1px;height:120px;background:#e9ecf3"></div>
<div class="t12" style="left:11px;top:11px;color:#909399;font-weight:bold">模型推理组</div>
<div class="t12" style="left:101px;top:11px;color:#909399;font-weight:bold">请求次数</div>
<div class="t12" style="left:181px;top:11px;color:#909399;font-weight:bold">可用率</div>
<div class="t12" style="left:261px;top:11px;color:#909399;font-weight:bold">平均总耗时</div>
<div class="t12" style="left:361px;top:11px;color:#909399;font-weight:bold">提示词Token消耗量</div>
<div class="t12" style="left:496px;top:11px;color:#909399;font-weight:bold">生成Token消耗量</div>
<div class="t12" style="left:616px;top:11px;color:#909399;font-weight:bold">平均每秒生成Token速率</div>
<div class="t12" style="left:11px;top:52px;color:#909399">250-8000:...</div>
<div class="t12" style="left:101px;top:52px;color:#909399">21</div>
<div class="t12" style="left:181px;top:52px;color:#909399">47.6%</div>
<div class="t12" style="left:261px;top:52px;color:#909399">1 m 34 s</div>
<div class="t12" style="left:361px;top:52px;color:#909399">19148</div>
<div class="t12" style="left:496px;top:52px;color:#909399">3875</div>
<div class="t12" style="left:616px;top:52px;color:#909399">4.1</div>
<div class="t12" style="left:11px;top:92px;color:#909399">253-ollam...</div>
<div class="t12" style="left:101px;top:92px;color:#909399">18</div>
<div class="t12" style="left:181px;top:92px;color:#909399">44.4%</div>
<div class="t12" style="left:261px;top:92px;color:#909399">53 s 979 ms</div>
<div class="t12" style="left:361px;top:92px;color:#909399">3881</div>
<div class="t12" style="left:496px;top:92px;color:#909399">3397</div>
<div class="t12" style="left:616px;top:92px;color:#909399">8.4</div>
<div style="position:absolute;left:221px;top:9px;width:11px;height:11px;border-radius:6px;background:#c8cbd1;color:#fff;font-size:9px;line-height:11px;text-align:center;font-style:italic;font-family:'Liberation Serif',serif;font-weight:bold">i</div>
<div style="position:absolute;left:324px;top:9px;width:11px;height:11px;border-radius:6px;background:#c8cbd1;color:#fff;font-size:9px;line-height:11px;text-align:center;font-style:italic;font-family:'Liberation Serif',serif;font-weight:bold">i</div>
<div style="position:absolute;left:751px;top:9px;width:11px;height:11px;border-radius:6px;background:#c8cbd1;color:#fff;font-size:9px;line-height:11px;text-align:center;font-style:italic;font-family:'Liberation Serif',serif;font-weight:bold">i</div>
<div style="position:absolute;left:753px;top:0;width:1px;height:136px;background:#e9ecf3"></div>
<div style="position:absolute;left:19px;top:124px;width:507px;height:9px;background:#8b8b8b;border-radius:5px"></div>
<svg style="position:absolute;left:0;top:120px" width="754" height="15"><path d="M12,4.5 L5.5,8.5 L12,12.5 Z" fill="#8b8b8b" stroke="#8b8b8b" stroke-linejoin="round"/><path d="M742.5,4.5 L749,8.5 L742.5,12.5 Z" fill="#8b8b8b" stroke="#8b8b8b" stroke-linejoin="round"/></svg>
</div>
<svg style="position:absolute;left:0;top:0" width="1574" height="862"><g fill="none" stroke="#f0883a" stroke-width="1.4" stroke-linejoin="round"><path d="M1274.54,545.28 L1276.02,545.55 L1276.02,547.45 L1274.54,547.72 L1274.07,548.85 L1274.94,550.09 L1273.59,551.44 L1272.35,550.57 L1271.22,551.04 L1270.95,552.52 L1269.05,552.52 L1268.78,551.04 L1267.65,550.57 L1266.41,551.44 L1265.06,550.09 L1265.93,548.85 L1265.46,547.72 L1263.98,547.45 L1263.98,545.55 L1265.46,545.28 L1265.93,544.15 L1265.06,542.91 L1266.41,541.56 L1267.65,542.43 L1268.78,541.96 L1269.05,540.48 L1270.95,540.48 L1271.22,541.96 L1272.35,542.43 L1273.59,541.56 L1274.94,542.91 L1274.07,544.15 Z"/><circle cx="1270" cy="546.5" r="2.3"/></g></svg>
<div class="t14" style="left:1283px;top:536px;color:#f0883a;font-weight:bold">列表自定义</div>

<div class="t13" style="left:773px;top:725px;color:#606266">共 2 条</div>
<div style="position:absolute;left:828px;top:721px;width:100px;height:28px;border:1px solid #dcdfe6;border-radius:3px;box-sizing:border-box"></div>
<div class="t13" style="left:848px;top:725px;color:#606266">10条/页</div>
<svg style="position:absolute;left:909px;top:729px" width="14" height="12"><path d="M2.5,3.5 L6.5,7.5 L10.5,3.5" fill="none" stroke="#c0c4cc" stroke-width="1"/></svg>
<div style="position:absolute;left:948px;top:721px;width:30px;height:28px;background:#f4f4f5;border-radius:2px"></div>
<svg style="position:absolute;left:956px;top:728px" width="14" height="14"><path d="M9,3 L5,7 L9,11" fill="none" stroke="#c0c4cc" stroke-width="1.5"/></svg>
<div style="position:absolute;left:988px;top:721px;width:30px;height:28px;background:#f0883a;border-radius:2px"></div>
<div class="t14" style="left:988px;top:725px;width:30px;text-align:center;color:#fff;font-weight:bold">1</div>
<div style="position:absolute;left:1028px;top:721px;width:30px;height:28px;background:#f4f4f5;border-radius:2px"></div>
<svg style="position:absolute;left:1036px;top:728px" width="14" height="14"><path d="M5,3 L9,7 L5,11" fill="none" stroke="#c0c4cc" stroke-width="1.5"/></svg>
<div class="t13" style="left:1087px;top:725px;color:#606266">前往</div>
<div style="position:absolute;left:1117px;top:721px;width:45px;height:28px;border:1px solid #dcdfe6;border-radius:3px;box-sizing:border-box"></div>
<div class="t13" style="left:1117px;top:725px;width:45px;text-align:center;color:#606266">1</div>
<div class="t13" style="left:1166px;top:725px;color:#606266">页</div>

<div style="position:absolute;left:1371px;top:125px;width:167px;height:628px;background:#f4f6fa;border-left:1px solid #dde3ee;border-bottom:1px solid #dde3ee;box-sizing:border-box"></div>
<div style="position:absolute;left:1538px;top:125px;width:1px;height:647px;background:#dde3ee"></div>
<div style="position:absolute;left:1371px;top:642px;width:166px;height:39px;background:#fff;border-top:1px solid #dde3ee;border-bottom:1px solid #dde3ee;box-sizing:border-box"></div>
<div style="position:absolute;left:1371px;top:155px;width:166px;height:566px;overflow:hidden">
<div class="t14" style="left:21px;top:-9px;color:#85888e;-webkit-text-stroke:0.15px #85888e">SSL 版本</div>
<div class="t14" style="left:21px;top:30px;color:#85888e;-webkit-text-stroke:0.15px #85888e">HTTP 状态码</div>
<div class="t14" style="left:21px;top:69px;color:#85888e;-webkit-text-stroke:0.15px #85888e">URI</div>
<div class="t14" style="left:21px;top:108px;color:#85888e;-webkit-text-stroke:0.15px #85888e">HTTP 慢请求</div>
<div class="t14" style="left:21px;top:147px;color:#85888e;-webkit-text-stroke:0.15px #85888e">浏览器</div>
<div class="t14" style="left:21px;top:186px;color:#85888e;-webkit-text-stroke:0.15px #85888e">设备</div>
<div class="t14" style="left:21px;top:225px;color:#85888e;-webkit-text-stroke:0.15px #85888e">操作系统</div>
<div class="t14" style="left:21px;top:264px;color:#85888e;-webkit-text-stroke:0.15px #85888e">外链来源</div>
<div class="t14" style="left:21px;top:303px;color:#85888e;-webkit-text-stroke:0.15px #85888e">HTTP 方法</div>
<div class="t14" style="left:21px;top:342px;color:#85888e;-webkit-text-stroke:0.15px #85888e">可信网关</div>
<div class="t14" style="left:21px;top:381px;color:#85888e;-webkit-text-stroke:0.15px #85888e">Token消耗统计</div>
<div class="t14" style="left:21px;top:420px;color:#85888e;-webkit-text-stroke:0.15px #85888e">模型访问量</div>
<div class="t14" style="left:21px;top:459px;color:#85888e;-webkit-text-stroke:0.15px #85888e">结束原因</div>
<div class="t14" style="left:21px;top:498px;color:#f0883a;-webkit-text-stroke:0.35px #f0883a">模型推理组访问量</div>
<div class="t14" style="left:21px;top:537px;color:#85888e;-webkit-text-stroke:0.15px #85888e">模型推理组访问时延</div>
</div>
<svg style="position:absolute;left:1440px;top:130px" width="30" height="20"><path d="M10.5,12 L15,7.5 L19.5,12" fill="none" stroke="#a8abb2" stroke-width="1"/></svg>
<svg style="position:absolute;left:1440px;top:727px" width="30" height="20"><path d="M10.5,8 L15,12.5 L19.5,8" fill="none" stroke="#a8abb2" stroke-width="1"/></svg>
<div style="position:absolute;left:1539px;top:124px;width:15px;height:718px;background:#fafafa"></div>
<div style="position:absolute;left:1538px;top:124px;width:16px;height:1px;background:#e4e7ed"></div>
<div style="position:absolute;left:1542px;top:289px;width:9px;height:526px;background:#8b8b8b;border-radius:5px"></div>
<svg style="position:absolute;left:1539px;top:124px" width="15" height="718"><path d="M3.5,12.5 L7.5,6.5 L11.5,12.5 Z" fill="#8b8b8b" stroke="#8b8b8b" stroke-linejoin="round"/><path d="M3.5,708 L7.5,714 L11.5,708 Z" fill="#8b8b8b" stroke="#8b8b8b" stroke-linejoin="round"/></svg>
</body></html>
